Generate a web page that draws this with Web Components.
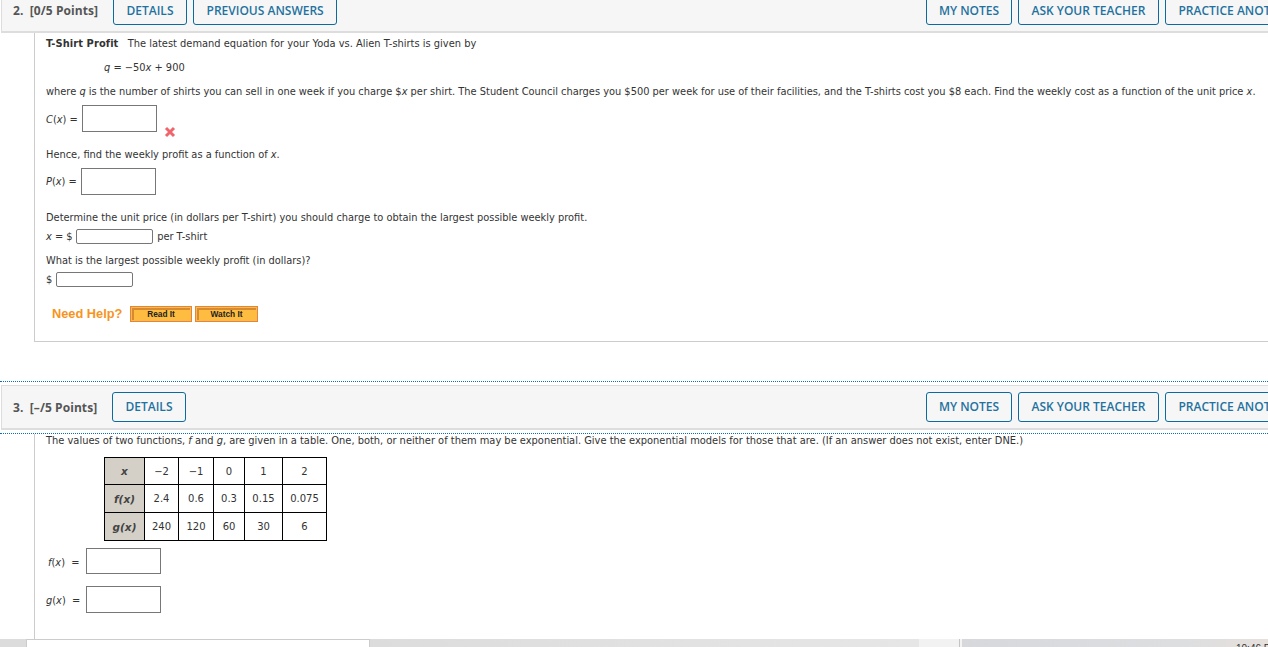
<!DOCTYPE html>
<html lang="en"><head><meta charset="utf-8"><title>Questions</title>
<style>
html,body{margin:0;padding:0;background:#fff;height:647px;overflow:hidden}
body{font:9.85px "DejaVu Sans",Verdana,sans-serif;color:#333;position:relative}
i{font-style:italic}
</style></head><body>
<template id="t-page"><style>:host{display:flex;flex-direction:column;margin-top:-16px}</style><slot></slot></template>
<template id="t-question"><style>
:host{display:block}
.dots{border-top:1px dotted #0a6ebd;height:0;margin-bottom:3px}
.dots.b{margin:3px 0 0}
:host(:not([open])) .dots.b{display:none}
.head{display:flex;align-items:center;height:42px;background:#f6f6f6;border:1px solid #ddd;border-width:1px 0 2px 1px;margin-left:1px}
.title{font:700 12px "Open Sans",sans-serif;letter-spacing:.07px;color:#555;margin-left:11px;width:var(--title-w,99px);white-space:pre;flex:none}
.gap{flex:1}
.btns{display:flex;gap:6px}
.right{display:flex;gap:6px;width:342px;flex:none;overflow:hidden}
.body{margin-left:34px;border-left:1px solid #ccc;padding-left:11px;border-bottom:1px solid #ccc}
:host([open]) .body{border-bottom:none;padding-bottom:40px}
</style>
<div class="dots"></div>
<div class="head"><span class="title"><slot name="title"></slot></span><div class="btns"><slot name="left"></slot></div><div class="gap"></div><div class="right"><slot name="right"></slot></div></div>
<div class="dots b"></div>
<div class="body"><slot></slot></div></template>
<template id="t-btn"><style>
:host{display:inline-flex;align-items:center;justify-content:center;box-sizing:border-box;height:30px;padding:0 12.5px var(--btn-pb,0);border:1px solid #0b6a9e;border-radius:3px;font:600 12px "Open Sans",sans-serif;color:#1f72a0;white-space:nowrap;flex:none;background:#f6f6f6}
</style><slot></slot></template>
<template id="t-line"><style>
:host{display:flex;align-items:center;white-space:nowrap;color:#333}
</style><slot></slot></template>
<template id="t-input"><style>
:host{display:inline-block;box-sizing:border-box;border:1px solid #777;background:#fff;flex:none}
:host([small]){border-radius:2px}
</style></template>
<template id="t-x"><style>:host{display:inline-flex}</style>
<svg width="12" height="12" viewBox="0 0 12 12"><path d="M2 2 L10 10 M10 2 L2 10" stroke="#f0656c" stroke-width="3" fill="none"/></svg></template>
<template id="t-help"><style>
:host{display:inline-flex;box-sizing:border-box;width:62px;height:16px;background:#febc40;border:1px solid #e8872a;box-shadow:inset 0 0 0 1px #f7b860,inset 1px 1px 0 2px #d88a2e;align-items:center;justify-content:center;font:700 8.3px "Liberation Sans",sans-serif;color:#222}
</style><slot></slot></template>
<template id="t-table"><style>
:host{display:block}
table{border-collapse:collapse;font:10px "DejaVu Sans",sans-serif;color:#333;table-layout:fixed;width:222px}
td,th{border:1px solid #000;padding:0;text-align:center;font-weight:400}
th{background:#d4d0c8;font-weight:700;font-style:italic;font-size:10.5px;color:#444}
</style><table><colgroup><col style="width:40px"><col style="width:34px"><col style="width:35px"><col style="width:31px"><col style="width:38px"><col style="width:44px"></colgroup>
<tr style="height:27px"><th>x</th><td>−2</td><td>−1</td><td>0</td><td>1</td><td>2</td></tr>
<tr style="height:28px"><th>f(x)</th><td>2.4</td><td>0.6</td><td>0.3</td><td>0.15</td><td>0.075</td></tr>
<tr style="height:28px"><th>g(x)</th><td>240</td><td>120</td><td>60</td><td>30</td><td>6</td></tr></table></template>
<template id="t-bar"><style>
:host{position:absolute;left:0;right:0;bottom:0;height:8px;display:flex;overflow:hidden;background:#d9d9d9}
.a{width:26px;background:#dcdcdc;flex:none}
.b{width:344px;background:#fff;box-sizing:border-box;border:1px solid #ccc;border-bottom:none;flex:none}
.c{width:549px;background:linear-gradient(90deg,#dcdcdc,#e6e6e6);flex:none}
.d{width:40px;background:#f2f2f2;flex:none}
.e{width:1px;background:#c4c4c4;flex:none}
.g{width:2px;background:#f4f4f4;flex:none}
.f{flex:1;background:linear-gradient(90deg,#d6d8dc,#dcdee0 70%,#e6e0dc);position:relative;overflow:hidden}
.t{position:absolute;left:274px;top:4px;font:10px "Liberation Sans",sans-serif;color:#333;white-space:nowrap}
</style><div class="a"></div><div class="b"></div><div class="c"></div><div class="d"></div><div class="e"></div><div class="g"></div><div class="f"><span class="t">10:46 PM</span></div></template>

<q-page>
<q-question style="--title-w:100px">
<span slot="title">2.  [0/5 Points]</span>
<q-btn slot="left">DETAILS</q-btn><q-btn slot="left">PREVIOUS ANSWERS</q-btn>
<q-btn slot="right" style="width:86px">MY NOTES</q-btn><q-btn slot="right">ASK YOUR TEACHER</q-btn><q-btn slot="right">PRACTICE ANOTHER</q-btn>
<q-line style="height:16px;padding-top:2px"><b style="letter-spacing:.1px;margin-right:3px">T-Shirt Profit</b>&nbsp;&nbsp; <span style="font-size:9.9px">The latest demand equation for your Yoda vs. Alien T-shirts is given by</span></q-line>
<q-line style="height:16px;margin-top:8px;padding-left:58px"><i>q</i>&nbsp;=&nbsp;−50<i>x</i>&nbsp;+&nbsp;900</q-line>
<q-line style="height:16px;margin-top:8px">where&nbsp;<i>q</i>&nbsp;is the number of shirts you can sell in one week if you charge $<i>x</i>&nbsp;per shirt. The Student Council charges you $500 per week for use of their facilities, and the T-shirts cost you $8 each. Find the weekly cost as a function of the unit price&nbsp;<i>x</i>.</q-line>
<q-line style="height:27px;margin-top:6px"><span style="padding-top:1px"><i>C</i>(<i>x</i>)&nbsp;=&nbsp;</span><q-input style="width:75px;height:27px;margin-left:1px"></q-input><q-x style="margin:27px 0 0 7px"></q-x></q-line>
<q-line style="height:16px;margin-top:14px">Hence, find the weekly profit as a function of&nbsp;<i>x</i>.</q-line>
<q-line style="height:27px;margin-top:6px"><span><i>P</i>(<i>x</i>)&nbsp;=&nbsp;</span><q-input style="width:75px;height:27px;margin-left:1px"></q-input></q-line>
<q-line style="height:16px;margin-top:14px">Determine the unit price (in dollars per T-shirt) you should charge to obtain the largest possible weekly profit.</q-line>
<q-line style="height:16px;margin-top:3px"><span style="width:30px;flex:none"><i>x</i>&nbsp;=&nbsp;$</span><q-input small style="width:77px;height:15px;margin-right:1px"></q-input>&nbsp;per T-shirt</q-line>
<q-line style="height:16px;margin-top:8px">What is the largest possible weekly profit (in dollars)?</q-line>
<q-line style="height:16px;margin-top:3px"><span style="width:10px;flex:none">$</span><q-input small style="width:77px;height:15px"></q-input></q-line>
<q-line style="height:16px;margin:19px 0 19px 6px"><span style="font:700 12.8px 'Liberation Sans',sans-serif;color:#f7941d;width:78px;flex:none;padding-bottom:2px">Need Help?</span><q-help>Read It</q-help><q-help style="margin-left:3px;width:63px">Watch It</q-help></q-line>
</q-question>
<div style="height:39px;flex:none"></div>
<q-question open style="--btn-pb:1px">
<span slot="title">3.  [–/5 Points]</span>
<q-btn slot="left">DETAILS</q-btn>
<q-btn slot="right" style="width:86px">MY NOTES</q-btn><q-btn slot="right">ASK YOUR TEACHER</q-btn><q-btn slot="right">PRACTICE ANOTHER</q-btn>
<q-line style="height:13px;font-size:9.88px">The values of two functions,&nbsp;<i>f</i>&nbsp;and&nbsp;<i>g</i>, are given in a table. One, both, or neither of them may be exponential. Give the exponential models for those that are. (If an answer does not exist, enter DNE.)</q-line>
<q-table style="margin:10px 0 0 58px"></q-table>
<q-line style="height:26px;margin:7px 0 0 2px"><span style="width:38px;flex:none;padding-top:2px"><i>f</i>(<i>x</i>)&nbsp;&nbsp;=</span><q-input style="width:75px;height:26px"></q-input></q-line>
<q-line style="height:27px;margin:12px 0 0"><span style="width:40px;flex:none;padding-top:2px"><i>g</i>(<i>x</i>)&nbsp;&nbsp;=</span><q-input style="width:75px;height:27px"></q-input></q-line>
</q-question>
</q-page>
<q-bar></q-bar>
<script>
[['q-page','t-page'],['q-question','t-question'],['q-btn','t-btn'],['q-line','t-line'],['q-input','t-input'],['q-x','t-x'],['q-help','t-help'],['q-table','t-table'],['q-bar','t-bar']].forEach(([n,t])=>{
customElements.define(n,class extends HTMLElement{constructor(){super();this.attachShadow({mode:'open'}).appendChild(document.getElementById(t).content.cloneNode(true));}});
});
</script>
</body></html>
